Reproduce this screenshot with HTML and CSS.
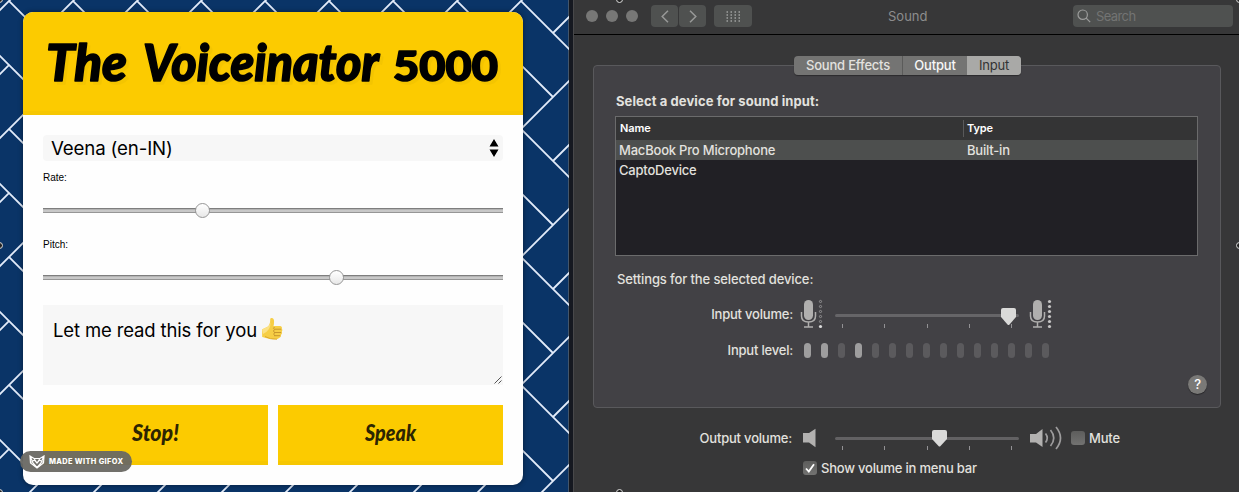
FILE: index.html
```html
<!DOCTYPE html>
<html lang="en">
<head>
<meta charset="utf-8">
<title>The Voiceinator 5000</title>
<link rel="stylesheet" href="styles.css">
</head>
<body>
<div class="screen">
  <main class="page">
    <svg class="pattern" width="569" height="492" aria-hidden="true">
      <defs>
        <pattern id="weave" x="9" y="1" width="64" height="128" patternUnits="userSpaceOnUse">
          <path d="M0 0 68 68M-4 60 32 96M32 32 68-4M-4 132 68 60M-4 4 4-4M60 132 68 124" />
        </pattern>
      </defs>
      <rect width="569" height="492" fill="url(#weave)"/>
    </svg>
    <section class="card">
      <h1 class="card-title">
        <svg width="500" height="102" viewBox="0 0 500 102">
          <g class="title-text">
            <text x="23" y="68.500" textLength="81" lengthAdjust="spacingAndGlyphs">The</text>
            <text x="120" y="68.500" textLength="236" lengthAdjust="spacingAndGlyphs">Voiceinator</text>
            <text class="digits" x="370" y="68.500" textLength="105" lengthAdjust="spacingAndGlyphs">5000</text>
          </g>
        </svg>
      </h1>
      <div class="card-body">
        <div class="voice"><span>Veena (en-IN)</span>
          <svg width="10" height="18" viewBox="0 0 10 18"><path d="M5 0 9.5 7.5H.5ZM5 18 .5 10.5h9Z"/></svg>
        </div>
        <label class="lbl">Rate:</label>
        <div class="range"><i style="margin-left:152px"></i></div>
        <label class="lbl pitch">Pitch:</label>
        <div class="range"><i style="margin-left:286px"></i></div>
        <div class="message">
          <span>Let me read this for you</span>
          <svg class="thumb" width="22" height="24" viewBox="0 0 22 24">
            <path d="M1 12.5Q4 11 7 9.5Q9.5 7 9.2 2Q9.4.8 11 1Q13.5 1.500 13 5.500Q13 7.500 12.500 9L19 9Q21.500 9.500 20.800 11.500Q22 13 20.800 14.800Q21.600 16.500 20 18Q20.400 20 18.500 20.700Q17 22.500 12 22.200Q7 21.800 1.200 20Z" fill="#f6ce45"/>
            <path d="M1 12.500Q4 11 7 9.500 9 8 9.500 5 9.800 9 8 12 6 15 2 17Z" fill="#fbe184"/>
            <path d="M13.500 12.200h6.700M13 15.500h7.200M13 18.700h6.200M13.500 10q-2 1.300 0 2.300-2 1.800 0 3.200-1.500 1.800.300 3.200" fill="none" stroke="#c8972d" stroke-width="1"/>
            <path d="M4 19.500Q9 22.500 16 22.200" fill="none" stroke="#deaa2c"/>
          </svg>
          <svg class="grip" width="8" height="8" viewBox="0 0 8 8"><path d="M.500 7.500 7.500.500M4.500 7.500 7.500 4.500"/></svg>
        </div>
        <div class="buttons">
          <button><svg width="225" height="60"><text x="89" y="36" textLength="47" lengthAdjust="spacingAndGlyphs">Stop!</text></svg></button>
          <button><svg width="225" height="60"><text x="87" y="36" textLength="51" lengthAdjust="spacingAndGlyphs">Speak</text></svg></button>
        </div>
      </div>
    </section>
    <div class="badge">
      <svg width="16" height="14" viewBox="0 0 16 14"><path d="M1 1 5 3.500H11L15 1 14.500 8 8 13 1.500 8ZM1.500 2 4 8 8 12.500 12 8 14.500 2M2 7 5.500 5 8 8 10.500 5 14 7M5 3.500 8 8 11 3.500"/></svg>
      <span>MADE WITH GIFOX</span>
    </div>
  </main>

  <section class="window">
    <header class="titlebar">
      <div class="lights"><i></i><i></i><i></i></div>
      <div class="nav">
        <span><svg width="8" height="13" viewBox="0 0 8 13"><path d="M7 .800 1.200 6.500 7 12.200"/></svg></span>
        <span><svg width="8" height="13" viewBox="0 0 8 13"><path d="M1 .800 6.800 6.500 1 12.200"/></svg></span>
      </div>
      <div class="grid-btn"><svg width="15" height="11" viewBox="0 0 15 11"><path d="M.500 1h14M.500 4h14M.500 7h14M.500 10h14" stroke-dasharray="1.500 2.500"/></svg></div>
      <div class="win-title">Sound</div>
      <div class="search"><svg width="14" height="14" viewBox="0 0 14 14"><circle cx="5.700" cy="5.700" r="4.700"/><path d="m9.200 9.200 4 4"/></svg><span>Search</span></div>
    </header>
    <div class="group">
      <div class="tabs"><span class="t1">Sound Effects</span><span class="t2">Output</span><span class="t3">Input</span></div>
      <h2 class="select-label"><span>Select a device for sound input:</span></h2>
      <div class="table">
        <div class="row head"><span>Name</span><span class="type">Type</span></div>
        <div class="row selected"><span>MacBook Pro Microphone</span><span>Built-in</span></div>
        <div class="row"><span>CaptoDevice</span><span></span></div>
      </div>
      <div class="settings-label">Settings for the selected device:</div>
      <div class="line input-volume">
        <span class="name">Input volume:</span>
        <svg class="mic" width="23" height="30" viewBox="0 0 23 30">
          <rect x="4" y="1" width="9" height="20" rx="4.500" fill="#b0afae"/>
          <path d="M1.500 13v4q0 6 7 6t7-6v-4M8.500 23v5M4 28h9" fill="none" stroke="#b0afae" stroke-width="1.500"/>
          <g fill="none" stroke="#979698" stroke-width=".9"><circle cx="20.500" cy="2.500" r="1.100"/><circle cx="20.500" cy="7.500" r="1.100"/><circle cx="20.500" cy="12.500" r="1.100"/><circle cx="20.500" cy="17.500" r="1.100"/><circle cx="20.500" cy="22.500" r="1.100"/></g><circle cx="20.500" cy="27.500" r="1.600" fill="#ddd"/>
        </svg>
        <svg class="slider" width="184" height="24" viewBox="0 0 184 24"><rect y="8" width="184" height="3" rx="1.500" fill="#666568"/><path d="M7.500 18v4M49.500 18v4M92.500 18v4M134.500 18v4M176.500 18v4" stroke="#929194"/><path d="M166 4Q166 2 168 2H179Q181 2 181 4V11L174.500 18.500Q173.500 19.500 172.500 18.500L166 11Z" fill="#dadad9"/></svg>
        <svg class="mic loud" width="23" height="30" viewBox="0 0 23 30">
          <rect x="4" y="1" width="9" height="20" rx="4.500" fill="#b0afae"/>
          <path d="M1.500 13v4q0 6 7 6t7-6v-4M8.500 23v5M4 28h9" fill="none" stroke="#b0afae" stroke-width="1.500"/>
          <g fill="#c7c6c6"><circle cx="20.500" cy="2.500" r="1.600"/><circle cx="20.500" cy="7.500" r="1.600"/><circle cx="20.500" cy="12.500" r="1.600"/><circle cx="20.500" cy="17.500" r="1.600"/><circle cx="20.500" cy="22.500" r="1.600"/><circle cx="20.500" cy="27.500" r="1.600"/></g>
        </svg>
      </div>
      <div class="line input-level">
        <span class="name">Input level:</span>
        <div class="level"><i class="on"></i><i class="on"></i><i></i><i class="on"></i><i></i><i></i><i></i><i></i><i></i><i></i><i></i><i></i><i></i><i></i><i></i></div>
      </div>
      <div class="help">?</div>
    </div>
    <div class="line output">
      <span class="name">Output volume:</span>
      <svg class="speaker" width="14" height="20" viewBox="0 0 14 20"><path d="M0 5H6L12.500.800V19.200L6 14.500H0Z" fill="#b2b1b0"/></svg>
      <svg class="slider" width="184" height="24" viewBox="0 0 184 24"><rect y="8" width="184" height="3" rx="1.500" fill="#626163"/><path d="M7.500 17v4M49.500 17v4M92.500 17v4M134.500 17v4M176.500 17v4" stroke="#929194"/><path d="M97 3Q97 1 99 1H110Q112 1 112 3V10L105.500 17Q104.500 18 103.500 17L97 10Z" fill="#dadad9"/></svg>
      <svg class="waves" width="32" height="24" viewBox="0 0 32 24"><path d="M0 8H6L12.500 3V21L6 16.500H0Z" fill="#b2b1b0"/><path d="M15.500 7.500Q19 12 15.500 16.500M20.500 4Q27 12 20.500 20M26 1Q35 12 26 23" fill="none" stroke="#9d9c9d" stroke-width="1.700"/></svg>
      <span class="check"></span><span class="mute">Mute</span>
    </div>
    <div class="line menu-option">
      <span class="check"><svg width="10" height="10" viewBox="0 0 10 10"><path d="m1 5.500 2.800 3L9 1.200"/></svg></span><span>Show volume in menu bar</span>
    </div>
  </section>
  <i class="handle h1"></i><i class="handle h2"></i><i class="handle h3"></i><i class="handle h4"></i><i class="handle h5"></i><i class="handle h6"></i><i class="handle h7"></i>
</div>
</body>
</html>
```
FILE: styles.css
```css
* { box-sizing: border-box; }
body { margin: 0; font-family: Inter, "Liberation Sans", sans-serif; }
svg { display: block; flex: none; }
.screen { position: relative; display: flex; width: 1239px; height: 492px; overflow: hidden; background: #151820; }
.page { position: relative; width: 569px; height: 492px; padding: 12px 0 0 23px; background: #0a3467; border-right: 1px solid #43566c; }
.pattern { position: absolute; top: 0; left: 0; }
.pattern path { fill: none; stroke: #e3ecfa; stroke-width: 1.8; }
.card { position: relative; width: 500px; height: 473px; border-radius: 10px; background: #fefefe; overflow: hidden; box-shadow: 0 0 4px 1px rgba(0, 0, 0, .3); }
.card-title { margin: 0; height: 103px; background: #fccb00; border-bottom: 4px solid #f6c702; }
.title-text { font: italic 900 51px Lato, sans-serif; fill: #000; stroke: #000; stroke-width: 1.6px; stroke-linejoin: round; filter: drop-shadow(3px 3px 0 rgba(190, 153, 0, .12)); }
.title-text .digits { font-style: normal; font-size: 41px; }
.card-body { padding: 20px 20px 0; }
.voice { display: flex; align-items: center; justify-content: space-between; height: 26px; padding: 0 4px 0 8px; border-radius: 4px; background: #f7f7f7; font-size: 18.7px; letter-spacing: -.15px; }
.lbl { display: block; margin-top: 11px; height: 12px; font: 10px/12px "Liberation Sans", sans-serif; }
.range { display: flex; align-items: center; height: 15px; margin-top: 19px; background: linear-gradient(#7e7e7e 0 1px, #b4b4b4 1px 2px, #c8c8c8 2px 4px, #969696 4px 5px) 0 5px / 100% 5px no-repeat; }
.range i { width: 15px; height: 15px; border: 1px solid #969696; border-radius: 50%; background: linear-gradient(#fff, #e8e8e8); }
.range + .pitch { margin-top: 21px; }
.message { position: relative; display: flex; gap: 4px; height: 80px; margin-top: 20px; padding: 13px 10px; background: #f7f7f7; font-size: 18.5px; letter-spacing: -.14px; line-height: 24px; }
.thumb { margin-top: -1px; }
.grip { position: absolute; right: 1px; bottom: 1px; }
.grip path { stroke: #555; stroke-width: 1; }
.buttons { display: grid; grid-template-columns: 1fr 1fr; gap: 10px; margin-top: 20px; }
.buttons button { height: 60px; padding: 0; border: 0; border-bottom: 4px solid #f6c702; background: #fccb00; }
.buttons text { font: italic 900 22px Lato, sans-serif; fill: #2c2502; }
.badge { position: absolute; left: 20px; top: 451px; display: flex; align-items: center; gap: 4px; width: 112px; height: 21px; padding-left: 9px; border-radius: 11px; background: rgba(105, 104, 99, .95); color: #fff; font-size: 7.4px; font-weight: 800; letter-spacing: .35px; white-space: nowrap; }
.badge path { fill: none; stroke: #fff; stroke-width: 1.2; }

.window { display: flex; flex-direction: column; width: 666px; height: 492px; margin-left: 4px; padding-left: 1px; border-left: 1px solid #48484a; background: #373738; color: #e2e1df; font-size: 13px; font-weight: 500; letter-spacing: -.2px; white-space: nowrap; }
.titlebar { flex: none; display: flex; height: 35px; margin-left: -1px; padding: 5px 0 0 12px; border-bottom: 1px solid #000; }
.lights { display: flex; gap: 8px; padding-top: 5px; }
.lights i { width: 12px; height: 12px; border-radius: 50%; background: #777776; }
.nav { display: flex; gap: 1px; margin-left: 13px; }
.nav span, .grid-btn { display: flex; align-items: center; justify-content: center; width: 27px; height: 22px; border-radius: 4px; background: #4f5150; }
.nav path { fill: none; stroke: #989998; stroke-width: 1.5; }
.grid-btn { width: 38px; margin-left: 8px; }
.grid-btn path { stroke: #a0a1a0; stroke-width: 1.3; }
.win-title { margin-left: 136px; width: 42px; line-height: 23px; color: #8d8d8d; font-weight: 400; letter-spacing: 0; }
.search { display: flex; align-items: center; gap: 5px; width: 160px; height: 22px; margin-left: 143px; padding-left: 4px; border-radius: 4px; background: #4f5150; color: #737473; font-weight: 400; letter-spacing: -.6px; }
.search span { letter-spacing: -.6px; }
.search svg { fill: none; stroke: #9c9d9c; stroke-width: 1.2; }
.group { flex: none; display: flex; flex-direction: column; width: 628px; height: 343px; margin: 30px 0 0 18px; padding-left: 21px; border: 1px solid #59595c; border-radius: 4px; background: #424145; }
.tabs { display: flex; width: 227px; height: 19px; margin: -10px 0 0 179px; border-radius: 4px; background: #747473; line-height: 19px; text-align: center; box-shadow: 0 1px 1px rgba(0, 0, 0, .35); }
.t1 { width: 109px; border-right: 1px solid #5b5b5a; }
.t2 { width: 64px; color: #f7f7f7; }
.t3 { width: 54px; border-radius: 0 4px 4px 0; background: #a9a9a7; color: #333; font-weight: 400; }
.select-label { margin: 18px 0 0 1px; font-size: 13px; line-height: 16px; font-weight: 700; letter-spacing: .1px; }
.table { width: 583px; height: 140px; margin-top: 7px; border: 1px solid #6b6b6c; background: #212025; }
.row { display: grid; grid-template-columns: 348px 1fr; height: 20px; padding-left: 3px; line-height: 20px; }
.row.head { grid-template-columns: 347px 1fr; height: 23px; padding-left: 4px; line-height: 23px; background: #343435; color: #fff; font-size: 11px; font-weight: 600; letter-spacing: -.1px; }
.row.selected { background: #4d4f4e; }
.row .type { position: relative; }
.row .type::before { content: ""; position: absolute; left: -4px; top: 3px; width: 1px; height: 17px; background: #59595a; }
.settings-label { margin: 15px 0 0 2px; height: 17px; line-height: 17px; letter-spacing: -.12px; }
.line { display: flex; align-items: center; }
.name { text-align: right; }
.input-volume { height: 30px; margin-top: 11px; }
.input-volume .name { width: 178px; margin-top: -1px; }
.input-volume .mic { margin-left: 7px; }
.input-volume .slider { margin: 7px 0 0 12px; }
.input-volume .mic.loud { margin-left: 10px; }
.input-level { height: 16px; margin-top: 13px; }
.input-level .name { width: 178px; margin-top: -1px; }
.level { display: flex; gap: 10px; margin-left: 11px; }
.level i { width: 7px; height: 15px; border-radius: 3.5px; background: #5b5a5d; }
.level i.on { background: #9e9d9e; }
.help { width: 19px; height: 19px; margin: 17px 0 0 573px; border-radius: 50%; background: #7a7977; line-height: 19px; text-align: center; font-size: 13px; color: #fff; box-shadow: 0 1px 1px rgba(0, 0, 0, .4); }
.output { height: 24px; margin-top: 18px; }
.output .name { width: 217px; }
.speaker { margin-left: 11px; }
.output .slider { margin: 5px 0 0 18px; }
.waves { margin-left: 11px; }
.check { display: flex; align-items: center; justify-content: center; width: 14px; height: 14px; border-radius: 3px; background: linear-gradient(#5d5d5c, #727271); }
.check path { fill: none; stroke: #fff; stroke-width: 1.8; }
.waves + .check { margin-left: 9px; }
.mute { margin-left: 4px; }
.menu-option { gap: 4px; height: 16px; margin: 10px 0 0 228px; }
.handle { position: absolute; width: 7px; height: 7px; border: 1px solid #ddd; border-radius: 50%; background: #222; }
.h1 { left: 616px; top: -4px; }
.h2 { left: 616px; top: 489px; }
.h3 { left: -4px; top: 242px; }
.h4 { left: 1236px; top: 242px; }
.h5 { left: -4px; top: -4px; }
.h6 { left: 1236px; top: -4px; }
.h7 { left: -4px; top: 489px; }
```
